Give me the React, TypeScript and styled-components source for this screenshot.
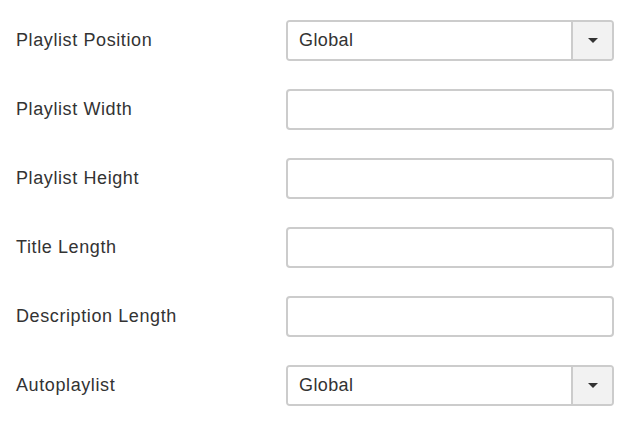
import React, { FC } from "react";
import styled, { createGlobalStyle } from "styled-components";

const GlobalStyle = createGlobalStyle`
  body {
    margin: 0;
    background: #fff;
    font-family: "Liberation Sans", Arial, sans-serif;
    color: #333;
  }
`;

const Form = styled.div`
  display: flex;
  flex-direction: column;
  gap: 28px;
  padding: 20px 0 0 16px;
  width: 598px;
`;

const Row = styled.div`
  display: grid;
  grid-template-columns: 270px 328px;
  align-items: center;
  height: 41px;
`;

const Label = styled.label`
  font-size: 18px;
  letter-spacing: 0.6px;
  color: #333;
`;

const TextInput = styled.input`
  box-sizing: border-box;
  width: 328px;
  height: 41px;
  border: 2px solid #ccc;
  border-radius: 4px;
  background: #fff;
  outline: none;
`;

const Select = styled.div`
  box-sizing: border-box;
  display: flex;
  width: 328px;
  height: 41px;
  border: 2px solid #ccc;
  border-radius: 4px;
  overflow: hidden;
`;

const SelectValue = styled.div`
  flex: 1;
  display: flex;
  align-items: center;
  padding-left: 11px;
  font-size: 18px;
  letter-spacing: 0.4px;
  color: #333;
  background: #fff;
`;

const SelectButton = styled.div`
  width: 39px;
  border-left: 2px solid #ccc;
  background: #f2f2f2;
  display: flex;
  align-items: center;
  justify-content: center;
`;

const Caret = styled.span`
  width: 0;
  height: 0;
  border-left: 5px solid transparent;
  border-right: 5px solid transparent;
  border-top: 5px solid #333;
`;

type Field = { label: string; kind: "select" | "text"; value?: string };

const fields: Field[] = [
  { label: "Playlist Position", kind: "select", value: "Global" },
  { label: "Playlist Width", kind: "text" },
  { label: "Playlist Height", kind: "text" },
  { label: "Title Length", kind: "text" },
  { label: "Description Length", kind: "text" },
  { label: "Autoplaylist", kind: "select", value: "Global" },
];

const App: FC = () => (
  <>
    <GlobalStyle />
    <Form>
      {fields.map((field, index) => (
        <Row key={index}>
          <Label>{field.label}</Label>
          {field.kind === "select" ? (
            <Select>
              <SelectValue>{field.value}</SelectValue>
              <SelectButton>
                <Caret />
              </SelectButton>
            </Select>
          ) : (
            <TextInput type="text" />
          )}
        </Row>
      ))}
    </Form>
  </>
);

export default App;
